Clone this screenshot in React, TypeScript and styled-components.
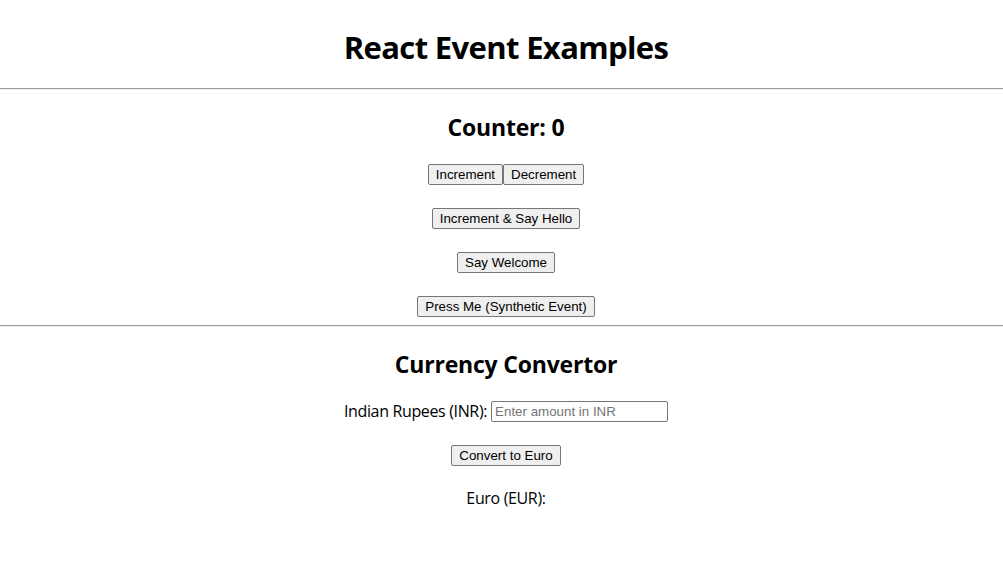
import React from "react";
import styled, { createGlobalStyle } from "styled-components";

const GlobalStyle = createGlobalStyle`
  html, body { margin: 0; padding: 0; background: #ffffff; }
  body { font-family: "Open Sans", "Noto Sans", sans-serif; color: #000; }
`;

const Page = styled.div`
  display: flex;
  flex-direction: column;
  width: 1003px;
  min-height: 562px;
  text-align: center;
`;

const Header = styled.header`
  display: flex;
  justify-content: center;
  padding: 27px 0 21px 9px;
`;

const Title = styled.h1`
  margin: 0;
  font-size: 31px;
  line-height: 40px;
  font-weight: 700;
  letter-spacing: -0.65px;
`;

const Divider = styled.hr`
  margin: 0;
  height: 0;
  border: none;
  border-top: 1px solid #9a9a9a;
  border-bottom: 1px solid #eeeeee;
`;

const Section = styled.section<{ $top: number; $bottom?: number }>`
  display: flex;
  flex-direction: column;
  align-items: center;
  padding: ${(p) => p.$top}px 0 ${(p) => p.$bottom ?? 0}px 9px;
`;

const Heading = styled.h2<{ $after: number }>`
  margin: 0 0 ${(p) => p.$after}px;
  font-size: 23px;
  line-height: 30px;
  font-weight: 700;
  letter-spacing: -0.2px;
`;

const Rows = styled.div<{ $gap: number }>`
  display: flex;
  flex-direction: column;
  align-items: center;
  gap: ${(p) => p.$gap}px;
`;

const ButtonRow = styled.div`
  display: flex;
  justify-content: center;
`;

const Button = styled.button`
  font-family: "Liberation Sans", Arial, sans-serif;
  font-size: 13.333px;
  line-height: 15px;
  color: #000;
  background: #efefef;
  border: 1px solid #767676;
  border-radius: 2px;
  padding: 2px 7px;
  height: 21px;
  margin: 0;
  cursor: default;
`;

const Field = styled.label`
  display: flex;
  align-items: center;
  gap: 4px;
  font-size: 16px;
  line-height: 21px;
  letter-spacing: -0.35px;
`;

const Input = styled.input`
  box-sizing: border-box;
  width: 177px;
  height: 21px;
  font-family: "Liberation Sans", Arial, sans-serif;
  font-size: 13.333px;
  letter-spacing: 0;
  padding: 1px 3px;
  border: 1px solid #767676;
  border-radius: 2px;
  outline: none;
  &::placeholder { color: #757575; }
`;

const Result = styled.p`
  margin: 0;
  font-size: 16px;
  line-height: 18px;
  letter-spacing: -0.35px;
`;

export default function App() {
  return (
    <Page>
      <GlobalStyle />
      <Header>
        <Title>React Event Examples</Title>
      </Header>
      <Divider />
      <Section $top={22} $bottom={8}>
        <Heading $after={22}>Counter: 0</Heading>
        <Rows $gap={23}>
          <ButtonRow>
            <Button>Increment</Button>
            <Button>Decrement</Button>
          </ButtonRow>
          <ButtonRow>
            <Button>Increment &amp; Say Hello</Button>
          </ButtonRow>
          <ButtonRow>
            <Button>Say Welcome</Button>
          </ButtonRow>
          <ButtonRow>
            <Button>Press Me (Synthetic Event)</Button>
          </ButtonRow>
        </Rows>
      </Section>
      <Divider />
      <Section $top={22}>
        <Heading $after={22}>Currency Convertor</Heading>
        <Rows $gap={23}>
          <Field>
            Indian Rupees (INR):
            <Input placeholder="Enter amount in INR" />
          </Field>
          <ButtonRow>
            <Button>Convert to Euro</Button>
          </ButtonRow>
          <Result>Euro (EUR):</Result>
        </Rows>
      </Section>
    </Page>
  );
}
